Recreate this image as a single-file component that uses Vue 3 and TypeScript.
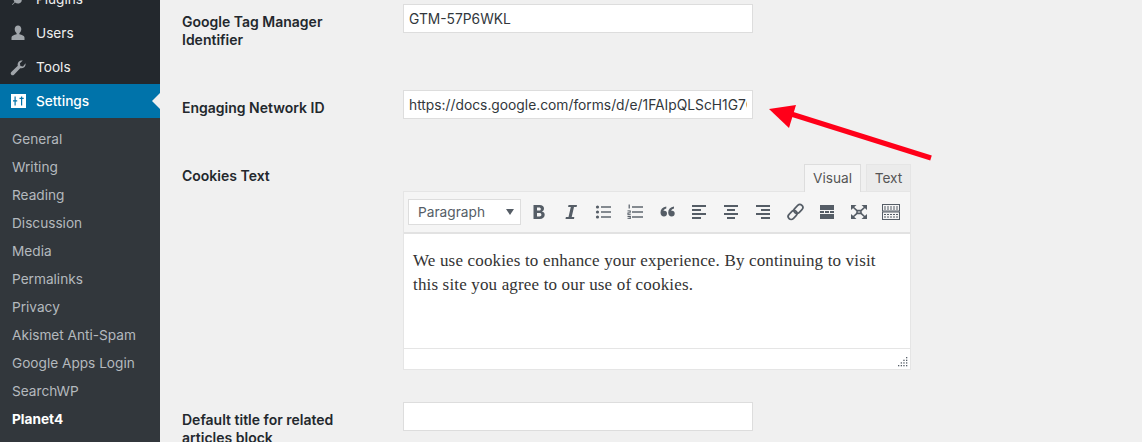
<script setup lang="ts">
const subItems: string[] = ['General', 'Writing', 'Reading', 'Discussion', 'Media', 'Permalinks', 'Privacy', 'Akismet Anti-Spam', 'Google Apps Login', 'SearchWP']
const alignLines: { x: number; w: number }[][] = [
  [{ x: 0, w: 14 }, { x: 0, w: 9 }, { x: 0, w: 14 }, { x: 0, w: 9 }],
  [{ x: 0, w: 14 }, { x: 3, w: 8 }, { x: 0, w: 14 }, { x: 3, w: 8 }],
  [{ x: 0, w: 14 }, { x: 5, w: 9 }, { x: 0, w: 14 }, { x: 5, w: 9 }],
]
const keyXs: number[] = [3, 6, 9, 12, 15]
</script>

<template>
  <div class="page">
    <aside class="sidebar">
      <div class="item">
        <svg class="mi" viewBox="0 0 20 20"><path d="M13 3l1.500 1.500-2.500 2.500 1 1 2.500-2.500L17 7l-3 3-.5 2.500C12 15 9 15 7 13.500L4.500 16 4 15.500 6.500 13C5 11 5 8 7.500 6.500L10 6z" /></svg>
        <span>Plugins</span>
      </div>
      <div class="item">
        <svg class="mi" viewBox="0 0 20 20"><path d="M10 2.500c2 0 3.300 1.500 3.300 3.600 0 1.700-.8 3.300-1.900 4.100v1c2.500.6 5.100 1.500 5.100 3.300v2.500h-13v-2.500c0-1.800 2.600-2.700 5.100-3.300v-1C7.500 9.400 6.700 7.800 6.700 6.100c0-2.100 1.300-3.600 3.300-3.600z" /></svg>
        <span>Users</span>
      </div>
      <div class="item">
        <svg class="mi" viewBox="0 0 20 20"><path d="M17.500 6.200c.3 1.700-.2 3.100-1.300 4.100-1.100 1-2.600 1.300-4 .9L6 17.700c-.8.800-2 .8-2.700.1-.8-.8-.8-1.900 0-2.700l6.500-6.300c-.4-1.400-.1-2.900.9-4 1.100-1.100 2.500-1.600 4.100-1.300l-2.900 2.800.5 2.600 2.600.6z" /></svg>
        <span>Tools</span>
      </div>
      <div class="item current">
        <svg class="mi" viewBox="0 0 20 20"><path fill-rule="evenodd" d="M3 3h15v14H3zM6.500 5.500v3.700H5v1.300h1.500v4h1.200v-4h1.500V9.200H7.700V5.500zM13 5.500v1.200h-1.500V8H13v6.500h1.200V8h1.500V6.700h-1.500V5.500z" /></svg>
        <span>Settings</span>
      </div>
      <ul class="submenu">
        <li v-for="s in subItems" :key="s">{{ s }}</li>
        <li class="strong">Planet4</li>
      </ul>
    </aside>

    <main class="content">
      <div class="row row-gtm">
        <label class="lbl">Google Tag Manager Identifier</label>
        <input class="field" type="text" value="GTM-57P6WKL" />
      </div>
      <div class="row row-en">
        <label class="lbl">Engaging Network ID</label>
        <input class="field" type="text" value="https://docs.google.com/forms/d/e/1FAIpQLScH1G7Qw" />
      </div>
      <div class="row row-cookies">
        <label class="lbl">Cookies Text</label>
        <div class="editor">
          <div class="tabs">
            <span class="tab active">Visual</span>
            <span class="tab">Text</span>
          </div>
          <div class="box">
            <div class="toolbar">
              <div class="select"><span>Paragraph</span><i class="caret"></i></div>
              <span class="btn"><svg viewBox="0 0 20 20"><path fill-rule="evenodd" d="M4.500 3h6.200c2.700 0 4.300 1.200 4.300 3.500 0 1.500-.8 2.600-2.100 3 1.700.3 2.800 1.500 2.800 3.300 0 2.600-1.900 4.200-5 4.200H4.500zM8 5.600v3h2c1.200 0 1.800-.5 1.800-1.500S11.200 5.600 10 5.600zM8 11v3.400h2.400c1.300 0 2-.6 2-1.700S11.700 11 10.400 11z" /></svg></span>
              <span class="btn"><svg viewBox="0 0 20 20"><path d="M7.500 3H16l-.4 2h-2.600l-2.300 10h2.600L13 17H4.500l.4-2h2.600L9.800 5H7.100z" /></svg></span>
              <span class="btn"><svg viewBox="0 0 20 20"><circle cx="4.500" cy="5" r="1.600" /><circle cx="4.500" cy="10" r="1.600" /><circle cx="4.500" cy="15" r="1.600" /><rect x="8" y="4.300" width="10" height="1.400" /><rect x="8" y="9.300" width="10" height="1.400" /><rect x="8" y="14.300" width="10" height="1.400" /></svg></span>
              <span class="btn"><svg viewBox="0 0 20 20"><rect x="7" y="4.300" width="11" height="1.400" /><rect x="7" y="9.300" width="11" height="1.400" /><rect x="7" y="14.300" width="11" height="1.400" /><rect x="3.600" y="2.500" width="1.200" height="4" /><rect x="2.500" y="8.400" width="3.200" height="1" /><rect x="4.700" y="9" width="1" height="1.400" /><rect x="2.500" y="10.400" width="3.200" height="1" /><rect x="2.500" y="11" width="1" height="1.400" /><rect x="2.500" y="12.200" width="3.200" height="1" /><rect x="2.500" y="14" width="3.200" height="1" /><rect x="2.500" y="15.800" width="3.200" height="1" /><rect x="4.700" y="14" width="1" height="2.800" /></svg></span>
              <span class="btn"><svg viewBox="0 0 20 20"><path d="M9.300 4.500v2C7.400 7 6.600 8 6.600 9c.3-.1.600-.2.900-.2 1.500 0 2.500 1.100 2.500 2.700 0 1.700-1.200 3-3 3-2 0-3.500-1.600-3.500-4 0-3.200 2.100-5.300 5.800-6zM17 4.500v2c-1.900.5-2.700 1.500-2.700 2.500.3-.1.600-.2.900-.2 1.500 0 2.500 1.100 2.500 2.700 0 1.700-1.200 3-3 3-2 0-3.500-1.600-3.500-4 0-3.200 2.100-5.300 5.800-6z" /></svg></span>
              <span v-for="(lines, i) in alignLines" :key="i" class="btn">
                <svg viewBox="0 0 20 20"><rect v-for="(l, j) in lines" :key="j" :x="3 + l.x" :y="3 + j * 4" :width="l.w" height="2" /></svg>
              </span>
              <span class="btn"><svg viewBox="0 0 20 20"><g fill="none" stroke="#555d66" stroke-width="1.700"><rect x="8.400" y="4" width="10" height="6" rx="3" transform="rotate(-45 13.400 7)" /><rect x="2.600" y="10" width="10" height="6" rx="3" transform="rotate(-45 7.600 13)" /></g></svg></span>
              <span class="btn"><svg viewBox="0 0 20 20"><rect x="3" y="3" width="14" height="5" /><rect x="3" y="9" width="4" height="2" /><rect x="8" y="9" width="4" height="2" /><rect x="13" y="9" width="4" height="2" /><rect x="3" y="12" width="14" height="5" /></svg></span>
              <span class="btn"><svg viewBox="0 0 20 20"><path fill="none" stroke="#555d66" stroke-width="1.600" d="M4 5l4 3.600h4L16 5M4 15l4-3.600h4l4 3.600M8 8.600v2.800M12 8.600v2.800" /><path d="M2 3h5.500L2 8zM18 3h-5.500L18 8zM2 17h5.500L2 12zM18 17h-5.500L18 12z" /></svg></span>
              <span class="btn"><svg viewBox="0 0 20 20" class="kitchen"><g fill="none" stroke="#555d66" stroke-width="1"><rect x="1.500" y="2.500" width="17" height="6.500" /><rect x="1.500" y="10" width="17" height="7.500" /></g><rect v-for="x in keyXs" :key="'a' + x" :x="x" y="4.500" width="2" height="1" /><rect v-for="x in keyXs" :key="'b' + x" :x="x" y="6.500" width="2" height="1" /><rect v-for="x in keyXs" :key="'c' + x" :x="x" y="12" width="2" height="1" /><rect v-for="x in keyXs" :key="'d' + x" :x="x" y="14.500" width="2" height="1" /></svg></span>
            </div>
            <div class="body">
              <p>We use cookies to enhance your experience. By continuing to visit this site you agree to our use of cookies.</p>
            </div>
            <div class="status">
              <svg class="grip" viewBox="0 0 10 10"><g fill="#555d66"><rect x="8" y="0" width="1.300" height="1.300" /><rect x="8" y="2.700" width="1.300" height="1.300" /><rect x="5.300" y="2.700" width="1.300" height="1.300" /><rect x="8" y="5.300" width="1.300" height="1.300" /><rect x="5.300" y="5.300" width="1.300" height="1.300" /><rect x="2.700" y="5.300" width="1.300" height="1.300" /><rect x="8" y="8" width="1.300" height="1.300" /><rect x="5.300" y="8" width="1.300" height="1.300" /><rect x="2.700" y="8" width="1.300" height="1.300" /><rect x="0" y="8" width="1.300" height="1.300" /></g></svg>
            </div>
          </div>
        </div>
      </div>
      <div class="row row-title">
        <label class="lbl">Default title for related articles block</label>
        <input class="field" type="text" value="" />
      </div>
    </main>

    <svg class="arrow" width="1142" height="442" viewBox="0 0 1142 442">
      <line x1="931" y1="158" x2="788" y2="113" stroke="#ff0019" stroke-width="5" />
      <polygon points="769,109 796,105 789,128" fill="#ff0019" />
    </svg>
  </div>
</template>

<style scoped>
.page {
  position: relative;
  display: flex;
  width: 1142px;
  height: 442px;
  overflow: hidden;
  background: #f0f0f0;
  font-family: Inter, Roboto, "Liberation Sans", sans-serif;
  font-size: 14px;
  color: #23282d;
}
.sidebar {
  width: 160px;
  flex: none;
  background: #32373c;
  margin-top: -18px;
  color: #eee;
  font-size: 13.65px;
}
.item {
  position: relative;
  display: flex;
  align-items: center;
  height: 34px;
  background: #23282d;
}
.mi {
  width: 20px;
  height: 20px;
  margin-left: 8px;
  margin-right: 8px;
  fill: #a0a5aa;
}
.current {
  background: #0073aa;
  color: #fff;
  font-weight: 500;
}
.current .mi {
  fill: #fff;
}
.current::after {
  content: "";
  position: absolute;
  right: 0;
  top: 9px;
  border: 8px solid transparent;
  border-right-color: #f0f0f0;
}
.submenu {
  list-style: none;
  margin: 0;
  padding: 7px 0 0;
}
.submenu li {
  height: 28px;
  line-height: 28px;
  padding-left: 12px;
  color: #b4b9be;
  white-space: nowrap;
}
.submenu .strong {
  color: #fff;
  font-weight: 700;
}
.content {
  flex: 1;
  padding: 4px 0 0 22px;
}
.row {
  display: flex;
  align-items: flex-start;
}
.row-en { margin-top: 41px; }
.row-cookies { margin-top: 45px; }
.row-title { margin-top: 32px; }
.lbl {
  width: 221px;
  flex: none;
  padding-top: 9px;
  padding-right: 40px;
  box-sizing: border-box;
  font-weight: 600;
  line-height: 18px;
}
.row-cookies .lbl {
  padding-top: 3px;
}
.field {
  width: 350px;
  height: 29px;
  box-sizing: border-box;
  border: 1px solid #ddd;
  background: #fff;
  padding: 0 5px;
  margin: 0;
  outline: none;
  color: #32373c;
  font-family: inherit;
  font-size: 13.8px;
}
.editor {
  width: 508px;
}
.tabs {
  display: flex;
  justify-content: flex-end;
  align-items: flex-end;
  gap: 5px;
  height: 28px;
}
.tab {
  display: flex;
  align-items: center;
  justify-content: center;
  box-sizing: border-box;
  width: 45px;
  height: 27px;
  margin-bottom: 1px;
  background: #ebebeb;
  border: 1px solid #e5e5e5;
  border-bottom: none;
  color: #555;
  font-size: 13.7px;
}
.tab.active {
  width: 57px;
  height: 28px;
  margin-bottom: 0;
  padding-bottom: 2px;
  background: #f5f5f5;
  border-color: #ddd;
  position: relative;
  z-index: 1;
}
.box {
  border: 1px solid #e5e5e5;
  background: #fff;
  margin-top: -1px;
}
.toolbar {
  display: flex;
  align-items: center;
  height: 40px;
  padding: 0 4px;
  background: #f5f5f5;
  border-bottom: 2px solid #e2e2e2;
}
.select {
  display: flex;
  flex: none;
  align-items: center;
  justify-content: space-between;
  box-sizing: border-box;
  width: 113px;
  height: 26px;
  margin-right: 2px;
  padding: 0 6px 0 9px;
  background: #fff;
  border: 1px solid #ddd;
  color: #555d66;
  font-size: 13.7px;
}
.caret {
  width: 0;
  height: 0;
  border-left: 4px solid transparent;
  border-right: 4px solid transparent;
  border-top: 6px solid #555d66;
}
.btn {
  display: flex;
  flex: none;
  align-items: center;
  justify-content: center;
  width: 32px;
  height: 26px;
}
.btn svg {
  width: 20px;
  height: 20px;
  fill: #555d66;
}
.body {
  height: 114px;
  box-sizing: border-box;
  padding: 15px 9px;
  background: #fff;
  color: #333;
  font-family: "Liberation Serif", serif;
  font-size: 17px;
  letter-spacing: 0.16px;
  line-height: 24px;
}
.body p {
  margin: 0;
}
.status {
  position: relative;
  height: 20px;
  background: #fff;
  border-top: 1px solid #e5e5e5;
}
.grip {
  position: absolute;
  right: 2px;
  bottom: 2px;
  width: 10px;
  height: 10px;
}
.arrow {
  position: absolute;
  left: 0;
  top: 0;
  pointer-events: none;
}
</style>
